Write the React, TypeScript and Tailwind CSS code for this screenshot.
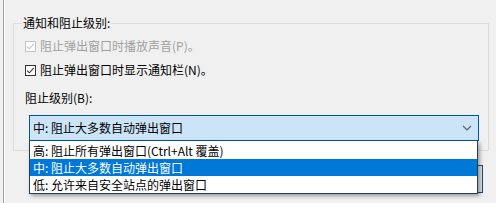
import React from 'react';

const options = [
  '高: 阻止所有弹出窗口(Ctrl+Alt 覆盖)',
  '中: 阻止大多数自动弹出窗口',
  '低: 允许来自安全站点的弹出窗口',
];

function Check({ disabled }: { disabled?: boolean }) {
  return (
    <div
      className={`w-[11px] h-[11px] shrink-0 border bg-white flex items-center justify-center ${
        disabled ? 'border-[#c4c4c4] bg-[#f0f0f0]' : 'border-[#333333]'
      }`}
    >
      <svg width="9" height="9" viewBox="0 0 9 9" fill="none">
        <path d="M1.2 4.6l2.2 2.2L7.8 1.8" stroke={disabled ? '#c4c4c4' : '#333333'} strokeWidth="1.1" />
      </svg>
    </div>
  );
}

export default function App() {
  return (
    <div
      className="w-[496px] h-[203px] bg-[#f0f0f0] overflow-hidden flex text-[12px] text-black"
      style={{ fontFamily: '"Noto Sans CJK SC", "Noto Sans", sans-serif' }}
    >
      {/* window edge */}
      <div className="w-[3px] shrink-0" />
      <div className="w-px shrink-0 bg-[#a0a0a0]" />
      <div className="w-px shrink-0 bg-white" />

      <div className="flex-1 flex flex-col pt-[23px]">
        {/* group box */}
        <div className="relative ml-[8px] mr-[7px] h-[128px] border border-[#dcdcdc]">
          <div className="absolute left-[8px] -top-[9px] px-px bg-[#f0f0f0] leading-[16px]">通知和阻止级别:</div>

          <div className="pt-[10px] pl-[11px] pr-[9px] flex flex-col">
            <div className="h-[24px] flex items-center gap-[4px] text-[#a0a0a0]">
              <Check disabled />
              <span className="leading-[16px]">阻止弹出窗口时播放声音(P)。</span>
            </div>
            <div className="h-[24px] flex items-center gap-[4px]">
              <Check />
              <span className="leading-[16px]">阻止弹出窗口时显示通知栏(N)。</span>
            </div>

            <div className="mt-[8px] h-[16px] leading-[16px]">阻止级别(B):</div>

            {/* combo box */}
            <div className="relative mt-[9px] ml-[4px]">
              <div className="h-[26px] border border-[#005499] bg-[#cce4f7] flex items-center justify-between pl-[3px] pr-[6px]">
                <span className="leading-[16px]">中: 阻止大多数自动弹出窗口</span>
                <svg width="10" height="6" viewBox="0 0 10 6" fill="none">
                  <path d="M1 1l4 4 4-4" stroke="#606060" strokeWidth="1.2" />
                </svg>
              </div>

              {/* open list */}
              <div className="absolute z-10 top-full left-0 right-[1px] bg-white border-x border-b border-[#1f3f5f] pt-px shadow-[2px_2px_4px_rgba(0,0,0,0.35)]">
                {options.map((o, i) => (
                  <div
                    key={o}
                    className={`h-[17px] flex items-center pl-[3px] leading-[16px] ${
                      i === 1 ? 'bg-[#0078d7] text-white' : ''
                    }`}
                  >
                    {o}
                  </div>
                ))}
              </div>
            </div>
          </div>
        </div>

        {/* button behind the list */}
        <div className="self-end mt-[14px] mr-[13px] w-[80px] h-[28px] border border-[#1c4f80] bg-[#e1e1e1]" />
      </div>
    </div>
  );
}
